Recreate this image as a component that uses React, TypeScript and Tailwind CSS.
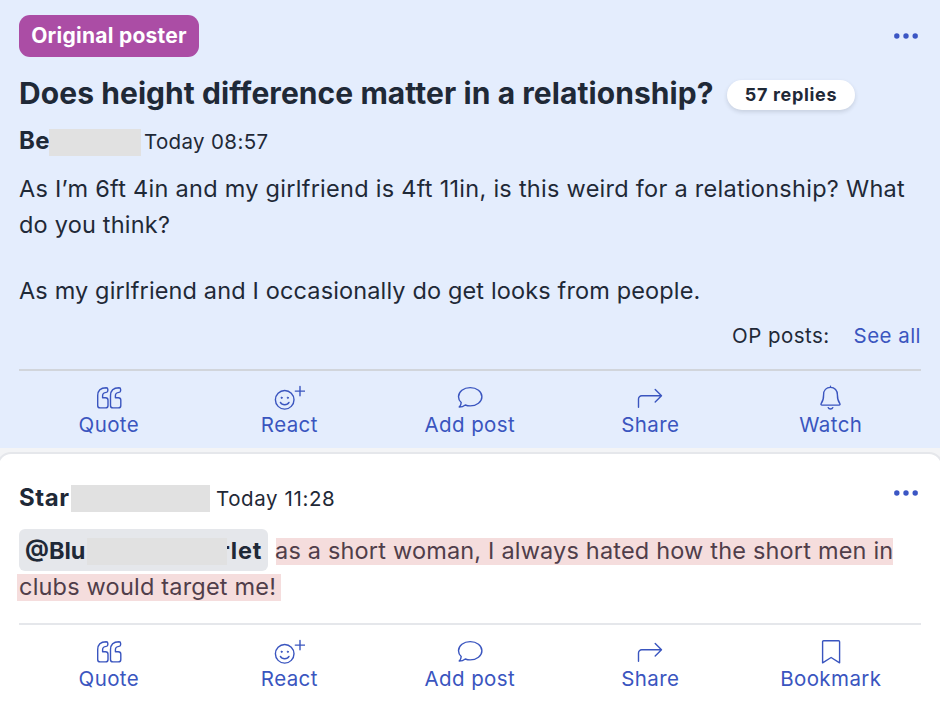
import type { ReactNode } from "react";

const iconProps = {
  fill: "none",
  stroke: "currentColor",
  strokeWidth: 1.4,
  strokeLinecap: "round" as const,
  strokeLinejoin: "round" as const,
  viewBox: "0 0 32 26",
  className: "block h-[26px] w-8",
};

const QuoteIcon = () => (
  <svg {...iconProps}>
    <path d="M13.2 2.7C7.9 2.8 4.7 5.8 4.7 10.6v9.8a2.5 2.5 0 0 0 2.5 2.5h5.3a2.5 2.5 0 0 0 2.5-2.5v-5.2a2.5 2.5 0 0 0-2.5-2.5H9.6V10.8c0-2 1.3-3.2 3.6-3.4 1-.1 1.6-.7 1.6-1.6V4.3c0-1-.6-1.6-1.6-1.6Z" />
    <path d="M26 2.7c-5.3.1-8.5 3.1-8.5 7.9v9.8a2.5 2.5 0 0 0 2.5 2.5h5.3a2.5 2.5 0 0 0 2.5-2.5v-5.2a2.5 2.5 0 0 0-2.5-2.5h-2.9V10.8c0-2 1.3-3.2 3.6-3.4 1-.1 1.6-.7 1.6-1.6V4.3c0-1-.6-1.6-1.6-1.6Z" />
  </svg>
);

const ReactIcon = () => (
  <svg {...iconProps}>
    <circle cx="11.7" cy="14.8" r="9.3" />
    <path d="M7.4 17.4c1.7 3.2 6.9 3.2 8.6 0" />
    <circle cx="8.6" cy="12.8" r=".7" fill="currentColor" strokeWidth=".7" />
    <circle cx="14.8" cy="12.8" r=".7" fill="currentColor" strokeWidth=".7" />
    <path d="M27 1.4v9.4M22.3 6.1h9.4" />
  </svg>
);

const CommentIcon = () => (
  <svg {...iconProps}>
    <path d="M16.2 2.6c6.5 0 11.7 4 11.7 9.1s-5.2 9.2-11.7 9.2c-1.8 0-3.4-.3-4.9-.9-1.6 1.3-3.6 2.1-6.1 2.1 1.3-1.4 2-2.8 2-4.6-1.7-1.6-2.7-3.6-2.7-5.8 0-5.1 5.2-9.1 11.7-9.1Z" />
  </svg>
);

const ShareIcon = () => (
  <svg {...iconProps}>
    <path d="M4.5 22.3V14A3.2 3.2 0 0 1 7.7 10.8H27.4M21.2 4.5l6.3 6.3-6.3 6.2" />
  </svg>
);

const BellIcon = () => (
  <svg {...iconProps}>
    <path d="M15.5 1.2v1.2M15.5 2.4c-4.3 0-6.9 3.1-6.9 7.3 0 4.7-.9 6.8-2.3 8.6-.7 1-.4 1.8.8 1.8h16.8c1.2 0 1.5-.8.8-1.8-1.4-1.8-2.3-3.9-2.3-8.6 0-4.2-2.6-7.3-6.9-7.3ZM13.2 22.6c.7 1.9 3.9 1.9 4.6 0" />
  </svg>
);

const BookmarkIcon = () => (
  <svg {...iconProps}>
    <path d="M8.6 1.8h15c.6 0 1 .4 1 1v21l-8.5-5.3-8.5 5.3v-21c0-.6.4-1 1-1Z" />
  </svg>
);

const Dots = () => (
  <svg viewBox="0 0 24 6" fill="currentColor" className="h-[6px] w-6 text-[#3b56c4]">
    <circle cx="2.8" cy="3" r="2.7" />
    <circle cx="12" cy="3" r="2.7" />
    <circle cx="21.2" cy="3" r="2.7" />
  </svg>
);

function Action({ icon, label }: { icon: ReactNode; label: string }) {
  return (
    <button className="flex flex-1 flex-col items-center text-[#3a55bf]">
      {icon}
      <span className="text-[20.5px] leading-[28px] tracking-[0.4px]">{label}</span>
    </button>
  );
}

function Actions({ last }: { last: ReactNode }) {
  return (
    <div className="-ml-[0.4px] flex pt-[14px]">
      <Action icon={<QuoteIcon />} label="Quote" />
      <Action icon={<ReactIcon />} label="React" />
      <Action icon={<CommentIcon />} label="Add post" />
      <Action icon={<ShareIcon />} label="Share" />
      {last}
    </div>
  );
}

export default function App() {
  return (
    <main className="h-[705px] w-[940px] overflow-hidden bg-[#f3f4f6] font-['Inter',sans-serif] text-[#1f2937]">
      <article className="h-[448px] bg-[#e4edfd] px-[19px] pt-[15px]">
        <div className="flex h-[42px] items-center justify-between pr-[3px]">
          <span className="flex h-[42px] w-[180px] items-center justify-center rounded-[11px] bg-[#ab4da5] text-[21px] font-bold tracking-[0.25px] whitespace-nowrap text-white">
            Original poster
          </span>
          <Dots />
        </div>
        <div className="mt-[15px] flex h-[42px] items-center">
          <h1 className="w-[708px] text-[30px] leading-[42px] font-bold tracking-[0.07px] whitespace-nowrap">
            Does height difference matter in a relationship?
          </h1>
          <span className="mt-[4px] flex h-[30px] w-[128px] items-center justify-center rounded-full bg-white pb-[2px] text-[18px] font-bold tracking-[0.65px] whitespace-nowrap shadow-[0_2px_4px_rgba(31,41,55,0.15)]">
            57 replies
          </span>
        </div>
        <div className="mt-[13px] flex h-[29px] items-center whitespace-nowrap">
          <b className="-mt-[2px] w-[30px] text-[24px] tracking-[0.4px]">Be</b>
          <span className="mt-[2px] mr-[3px] h-[27px] w-[92px] bg-[#e1e1e1]" />
          <span className="mt-[2px] text-[20.5px] tracking-[0.35px]">Today 08:57</span>
        </div>
        <p className="mt-[15px] text-[23.5px] leading-[36px] tracking-[0.27px] whitespace-nowrap">
          As I’m 6ft 4in and my girlfriend is 4ft 11in, is this weird for a relationship? What
          <br />
          <span className="tracking-[0.2px]">do you think?</span>
        </p>
        <p className="mt-[30px] text-[23.5px] leading-[36px] tracking-[0.14px] whitespace-nowrap">
          As my girlfriend and I occasionally do get looks from people.
        </p>
        <div className="mt-[9px] flex h-[36px] items-center justify-end gap-[24px] text-[20.5px] tracking-[0.45px]">
          <span>OP posts:</span>
          <a className="text-[#3a55bf]">See all</a>
        </div>
        <div className="mt-[15px] border-t-2 border-[#d1d5db]">
          <Actions last={<Action icon={<BellIcon />} label="Watch" />} />
        </div>
      </article>

      <article className="-mx-[3px] mt-[4px] h-[270px] rounded-t-[14px] border-2 border-[#e5e7eb] bg-white px-[20px] pt-[28px]">
        <div className="flex h-[33px] items-center whitespace-nowrap">
          <b className="-mt-[2px] w-[52px] text-[24px] tracking-[0.6px]">Star</b>
          <span className="mr-[6px] h-[27px] w-[139px] bg-[#e1e1e1]" />
          <span className="mt-[2px] flex-1 text-[20.5px] tracking-[0.6px]">Today 11:28</span>
          <span className="mr-[3px] mb-[12px] flex">
            <Dots />
          </span>
        </div>
        <div className="mt-[14px] flex h-[42px] items-center text-[23.5px] whitespace-nowrap">
          <span className="flex h-[42px] w-[249px] items-center rounded-[6px] bg-[#e5e7eb] pl-[6px] font-bold">
            <span className="mt-[2px] w-[62px]">@Blu</span>
            <span className="z-10 mt-[2px] h-[27px] w-[140px] bg-[#e1e1e1]" />
            <span className="mt-[2px] -ml-[7px] tracking-[0.8px]">rlet</span>
          </span>
          <span className="mt-[2px] ml-[8px] h-[27px] w-[617px] bg-[#f5dddd] leading-[25px] tracking-[0.18px] text-[#503e4a]">
            <span className="-ml-px">as a short woman, I always hated how the short men in</span>
          </span>
        </div>
        <div className="mt-[3px] -ml-[2px] h-[27px] w-[264px] bg-[#f5dddd] pl-[2px] text-[23.5px] leading-[25px] tracking-[0.2px] whitespace-nowrap text-[#503e4a]">
          clubs would target me!
        </div>
        <div className="mt-[22px] border-t-2 border-[#e5e7eb]">
          <Actions last={<Action icon={<BookmarkIcon />} label="Bookmark" />} />
        </div>
      </article>
    </main>
  );
}
